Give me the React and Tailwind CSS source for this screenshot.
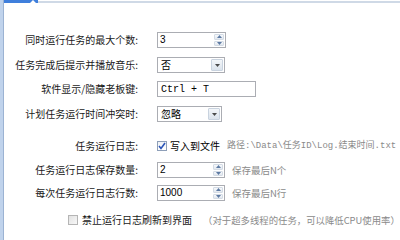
const cjk = "font-['Noto_Sans_CJK_SC',sans-serif]";
const mix = "font-['Liberation_Mono','Noto_Sans_CJK_SC',monospace]";

function Up() {
  return (
    <svg width="5" height="3" viewBox="0 0 5 3">
      <path d="M0 3L2.5 0L5 3Z" fill="#5d7aa3" />
    </svg>
  );
}
function Down({ color = "#5d7aa3" }) {
  return (
    <svg width="5" height="3" viewBox="0 0 5 3">
      <path d="M0 0L2.5 3L5 0Z" fill={color} />
    </svg>
  );
}

function Spin({ value, w = "w-[69px]" }) {
  return (
    <div className={`flex h-4 ${w} border border-[#abadb3] bg-white`}>
      <div className="flex-1 pl-[2px] text-[10px] leading-[14px] text-black font-['Liberation_Sans',sans-serif]">
        {value}
      </div>
      <div className="flex w-[12px] flex-col gap-[1px] p-[1px]">
        <div className="flex flex-1 items-center justify-center rounded-[1px] border border-[#d3dbe5] bg-linear-to-b from-[#f7f9fb] to-[#e2e8ef]">
          <Up />
        </div>
        <div className="flex flex-1 items-center justify-center rounded-[1px] border border-[#d3dbe5] bg-linear-to-b from-[#f7f9fb] to-[#e2e8ef]">
          <Down />
        </div>
      </div>
    </div>
  );
}

function Select({ value, w }) {
  return (
    <div className={`flex h-4 ${w} border border-[#abadb3] bg-white`}>
      <div className={`flex-1 pl-[3px] text-[10px] leading-[14px] text-black ${cjk}`}>{value}</div>
      <div className="m-[1px] flex w-[12px] items-center justify-center rounded-[1px] border border-[#c9d3df] bg-linear-to-b from-[#f3f6f9] to-[#dbe3ec]">
        <Down color="#4a4a4a" />
      </div>
    </div>
  );
}

function Label({ children }) {
  return (
    <div className={`w-[134px] shrink-0 whitespace-nowrap text-right text-[10px] leading-[12px] text-[#1a1a1a] ${cjk}`}>
      {children}
    </div>
  );
}

function Row({ mt, children }) {
  return <div className={`flex h-6 items-center gap-[19px] ${mt}`}>{children}</div>;
}

export default function App() {
  return (
    <div className="relative flex h-[240px] w-[400px] overflow-hidden bg-white">
      <div className="flex w-[4px] shrink-0">
        <div className="w-[3px] bg-[#c0d3ec]" />
        <div className="w-[1px] bg-[#9cb3d3]" />
      </div>
      <div className="flex flex-1 flex-col">
        <div className="flex h-[4px] items-start">
          <div className="h-[3px] w-[26px] bg-[#3f7fdc]" />
          <svg width="6" height="3" viewBox="0 0 6 3">
            <path d="M0 0H6V3L3 0L0 3Z" fill="#3f7fdc" />
          </svg>
          <div className="h-[3px] w-[2px] bg-[#3f7fdc]" />
          <div className="mt-[1px] h-[2px] flex-1 bg-[#cfd9e6]" />
        </div>

        <div className="flex flex-col">
          <Row mt="mt-[24px]">
            <Label>同时运行任务的最大个数:</Label>
            <Spin value="3" />
          </Row>
          <Row mt="mt-[1px]">
            <Label>任务完成后提示并播放音乐:</Label>
            <Select value="否" w="w-[68px]" />
          </Row>
          <Row mt="mt-0">
            <Label>软件显示/隐藏老板键:</Label>
            <div className="flex h-4 w-[99px] items-center border border-[#abadb3] bg-white pl-[3px] text-[10px] text-black font-['Liberation_Mono',monospace]">
              Ctrl + T
            </div>
          </Row>
          <Row mt="mt-[1px]">
            <Label>计划任务运行时间冲突时:</Label>
            <Select value="忽略" w="w-[65px]" />
          </Row>
          <Row mt="mt-[8px]">
            <Label>任务运行日志:</Label>
            <div className="flex items-center whitespace-nowrap">
              <div className="flex h-[10px] w-[10px] items-center justify-center border border-[#8e9fb8] bg-linear-to-b from-[#eef2f7] to-[#ffffff]">
                <svg width="8" height="8" viewBox="0 0 8 8">
                  <path d="M1 4L3 6.5L7 1" fill="none" stroke="#2a54b8" strokeWidth="1.6" />
                </svg>
              </div>
              <span className={`ml-[3px] text-[10px] leading-[12px] text-black ${cjk}`}>写入到文件</span>
              <span className={`ml-[7px] text-[9px] leading-[12px] text-[#8a8a8a] ${mix}`}>
                路径:\Data\任务ID\Log.结束时间.txt
              </span>
            </div>
          </Row>
          <Row mt="mt-0">
            <Label>任务运行日志保存数量:</Label>
            <div className="flex items-center gap-[7px] whitespace-nowrap">
              <Spin value="2" w="w-[68px]" />
              <span className={`text-[9.5px] text-[#8a8a8a] ${cjk}`}>保存最后N个</span>
            </div>
          </Row>
          <Row mt="mt-[-1px]">
            <Label>每次任务运行日志行数:</Label>
            <div className="flex items-center gap-[7px] whitespace-nowrap">
              <Spin value="1000" w="w-[68px]" />
              <span className={`text-[9.5px] text-[#8a8a8a] ${cjk}`}>保存最后N行</span>
            </div>
          </Row>
          <div className="mt-[3px] flex h-6 items-center whitespace-nowrap pl-[64px]">
            <div className="h-[10px] w-[10px] shrink-0 border border-[#b5b5b5] bg-linear-to-br from-[#e2e2e2] to-[#f8f8f8]" />
            <span className={`ml-[4px] shrink-0 text-[10px] leading-[12px] text-[#1a1a1a] ${cjk}`}>禁止运行日志刷新到界面</span>
            <span className={`ml-[11px] shrink-0 text-[9.4px] leading-[12px] text-[#8a8a8a] ${cjk}`}>
              （对于超多线程的任务，可以降低CPU使用率）
            </span>
          </div>
        </div>
      </div>
    </div>
  );
}
